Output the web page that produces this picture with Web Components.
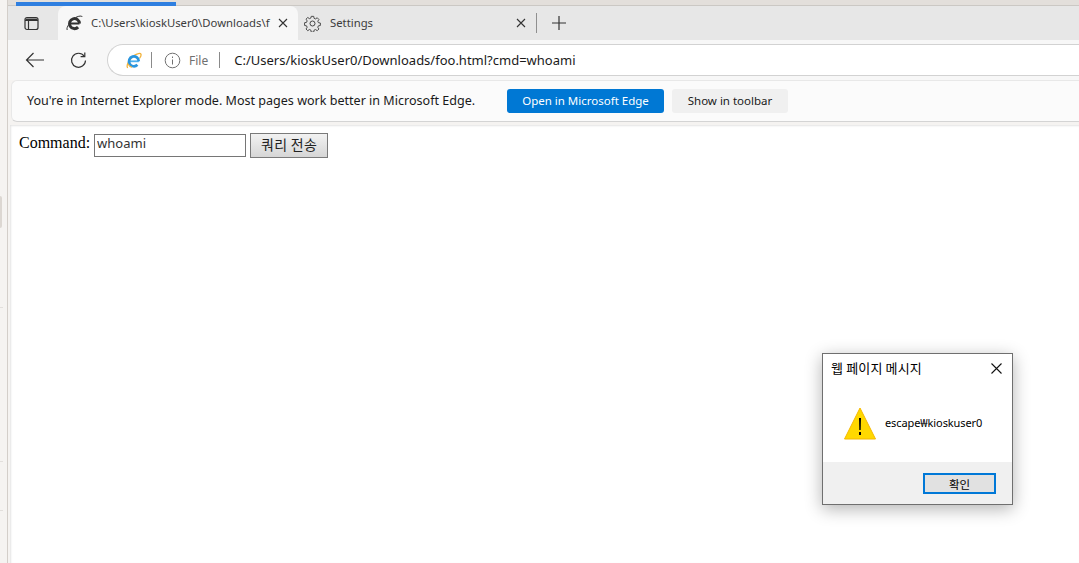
<!DOCTYPE html>
<html>
<head>
<meta charset="utf-8">
<title>foo.html</title>
<style>
  html, body { margin: 0; height: 563px; overflow: hidden; background: #fff; }
</style>
</head>
<body>
<edge-window>
  <tab-strip></tab-strip>
  <address-bar url="C:/Users/kioskUser0/Downloads/foo.html?cmd=whoami"></address-bar>
  <ie-infobar></ie-infobar>
  <command-page></command-page>
</edge-window>
<alert-dialog title="웹 페이지 메시지" message="escape₩kioskuser0" ok="확인"></alert-dialog>

<script>
'use strict';

const UI_FONT = '"Noto Sans", "Noto Sans CJK KR", sans-serif'
const KR_FONT = '"Noto Sans CJK KR", sans-serif'

// Blue/orange IE logo, used in the address bar
const IE_LOGO = `
  <svg width="16" height="17" viewBox="0 0 16 17" fill="none">
    <path d="M1.500 15.500C.5 14 1.800 9.500 5.500 6M8 3.500C11 1.500 14.500.8 15 2.200c.3 1-.3 2.500-1.200 3.800" stroke="#f2b33d" stroke-width="1.300" stroke-linecap="round"/>
    <path d="M3 9.300h9.800" stroke="#4cb0ee" stroke-width="1.800"/>
    <path d="M12.800 9.300a4.900 4.900 0 1 0-1.400 3.500" stroke="#2a95de" stroke-width="2.700"/>
    <path d="M2 12a6 6 0 0 0 4 3.300" stroke="#f2b33d" stroke-width="1.100"/>
  </svg>`

// Dark "e" used as the tab's favicon in IE mode
const IE_FAVICON = `
  <svg width="17" height="16" viewBox="0 0 17 16" fill="none" stroke="#333">
    <path d="M3.500 8.500h10" stroke-width="2"/>
    <path d="M13.500 8.500a5 5 0 1 0-1.400 3.600" stroke-width="3"/>
    <path d="M1.200 15c-.7-1.300.2-3.500 1.600-5.500M10 2.300C13 .8 16 .6 16.400 2" stroke-width="1"/>
  </svg>`

customElements.define('edge-window', class extends HTMLElement {
  constructor() {
    super()
    this.attachShadow({mode: 'open'}).innerHTML = `
      <style>
        :host { display: flex; height: 563px; background: #f5f3f1; }
        .rail { display: flex; flex-direction: column; flex: none; width: 7px; padding-top: 196px; box-sizing: border-box; }
        .grip { height: 32px; width: 2px; background: #dcd7d2; border-radius: 0 2px 2px 0; }
        .tick { height: 1px; width: 3px; background: #e2dfdc; }
        .main { flex: 1; min-width: 0; display: flex; flex-direction: column; border-left: 1px solid #d3cec9; }
        .top { height: 5px; background: #e3dfdb; flex: none; border-bottom: 1px solid #cbc8c4; }
        .progress { width: 160px; height: 4px; margin: 2px 0 0 8px; background: #2f7fe0; }
      </style>
      <div class="rail">
        <div class="grip"></div>
        <div class="tick" style="margin-top:79px"></div>
        <div class="tick" style="margin-top:153px"></div>
        <div class="tick" style="margin-top:48px"></div>
      </div>
      <div class="main">
        <div class="top"><div class="progress"></div></div>
        <slot></slot>
      </div>`
  }
})

customElements.define('tab-strip', class extends HTMLElement {
  constructor() {
    super()
    this.attachShadow({mode: 'open'}).innerHTML = `
      <style>
        :host { display: flex; align-items: stretch; height: 34px; flex: none; background: #e7e7e7; font: 11.300px ${UI_FONT}; color: #3c3c3c; }
        .side { width: 50px; flex: none; display: flex; align-items: center; padding-left: 16px; box-sizing: border-box; }
        .tab { display: flex; align-items: center; box-sizing: border-box; white-space: nowrap; }
        .active { width: 240px; background: #f7f7f7; border-radius: 8px 8px 0 0; padding: 0 10px 0 8px; }
        .other { width: 238px; padding: 0 0 0 6px; }
        .label { flex: 1; min-width: 0; padding-bottom: 1px; }
        .active .label { margin-left: 8px; }
        .close { flex: none; display: block; }
        .sep { width: 1px; height: 20px; margin: 7px 0 0 0; background: #8f8f8f; flex: none; }
        .plus { margin: 9px 0 0 14px; flex: none; width: 16px; height: 16px; }
      </style>
      <div class="side">
        <svg width="15" height="15" viewBox="0 0 15 15" fill="none" stroke="#333" stroke-width="1.200"><rect x="1" y="1.500" width="13" height="12" rx="2"/><path d="M1 4.500h13M4.500 4.500v9"/><path d="M1.500 2.500h12v2h-12z" fill="#333" stroke="none"/></svg>
      </div>
      <div class="tab active">
        ${IE_FAVICON}
        <span class="label">C:\\Users\\kioskUser0\\Downloads\\f</span>
        <svg class="close" width="10" height="10" viewBox="0 0 10 10" stroke="#333" stroke-width="1.100"><path d="M1 1l8 8M9 1l-8 8"/></svg>
      </div>
      <div class="tab other">
        <svg width="17" height="17" viewBox="0 0 17 17" fill="none" stroke="#444" stroke-width="1"><circle cx="8.500" cy="8.500" r="2.500"/><path d="M7.200 1h2.600l.4 2.100 1.500.6 1.800-1.200 1.800 1.800-1.200 1.800.6 1.500 2.100.4v2.600l-2.100.4-.6 1.500 1.200 1.800-1.800 1.800-1.800-1.200-1.500.6-.4 2.100H7.200l-.4-2.100-1.500-.6-1.800 1.200-1.800-1.800 1.200-1.800-.6-1.500-2.100-.4V7.700l2.100-.4.6-1.500-1.200-1.800 1.800-1.800 1.800 1.200 1.500-.6z" transform="translate(.4 .4) scale(.95)"/></svg>
        <span class="label" style="margin-left:9px">Settings</span>
        <svg class="close" width="10" height="10" viewBox="0 0 10 10" stroke="#333" stroke-width="1.100"><path d="M1 1l8 8M9 1l-8 8"/></svg>
        <span style="width:10px;flex:none"></span>
      </div>
      <div class="sep"></div>
      <svg class="plus" viewBox="0 0 16 16" stroke="#333" stroke-width="1.200"><path d="M8 1v14M1 8h14"/></svg>`
  }
})

customElements.define('address-bar', class extends HTMLElement {
  constructor() {
    super()
    let url = this.getAttribute('url')
    this.attachShadow({mode: 'open'}).innerHTML = `
      <style>
        :host { display: flex; align-items: flex-start; height: 40px; flex: none; background: #f7f7f7; box-sizing: border-box; padding-top: 4px; font: 12px ${UI_FONT}; }
        .nav { width: 99px; flex: none; display: flex; align-items: center; height: 32px; padding-left: 17px; box-sizing: border-box; gap: 25px; }
        .pill { flex: 1; height: 32px; box-sizing: border-box; background: #fff; border: 1px solid #d2d2d2; border-right: 0; border-radius: 16px 0 0 16px; display: flex; align-items: center; padding-left: 18px; white-space: nowrap; }
        .bar { width: 1px; height: 16px; background: #8a8a8a; flex: none; }
        .file { color: #707070; margin: 0 11px 0 8px; }
        .url { color: #1a1a1a; margin-left: 14px; font-size: 13px; }
      </style>
      <div class="nav">
        <svg width="20" height="16" viewBox="0 0 20 16" fill="none" stroke="#333" stroke-width="1.200"><path d="M19 8H1.500M8.500 1l-7 7 7 7"/></svg>
        <svg width="17" height="17" viewBox="0 0 17 17" fill="none" stroke="#333" stroke-width="1.200"><path d="M14.200 4.200A7 7 0 1 0 15.500 8.500"/><path d="M14.800 .5v4.200h-4.200"/></svg>
      </div>
      <div class="pill">
        ${IE_LOGO}
        <span class="bar" style="margin-left:9px"></span>
        <svg style="margin-left:12px" width="17" height="17" viewBox="0 0 17 17" fill="none" stroke="#707070"><circle cx="8.500" cy="8.500" r="7.300"/><path d="M8.500 7.500v5M8.500 4.500v1.500"/></svg>
        <span class="file">File</span>
        <span class="bar"></span>
        <span class="url">${url}</span>
      </div>`
  }
})

customElements.define('ie-infobar', class extends HTMLElement {
  constructor() {
    super()
    this.attachShadow({mode: 'open'}).innerHTML = `
      <style>
        :host { display: flex; align-items: center; height: 42px; flex: none; box-sizing: border-box; background: #fbfbfb; border: 1px solid #e8e8e8; border-bottom: 1px solid #d4d4d4; border-right: 0; border-radius: 6px 0 0 6px; margin-left: 3px; padding-left: 15px; font: 12.550px ${UI_FONT}; color: #1a1a1a; white-space: nowrap; }
        .msg { width: 480px; flex: none; padding-bottom: 1px; }
        .btn { height: 24px; display: flex; align-items: center; justify-content: center; border-radius: 3px; box-sizing: border-box; flex: none; font-size: 11.500px; padding-bottom: 1px; }
        .primary { width: 157px; background: #0078d4; color: #fff; }
        .plain { width: 116px; background: #f0f0f0; margin-left: 8px; }
      </style>
      <span class="msg">You're in Internet Explorer mode. Most pages work better in Microsoft Edge.</span>
      <span class="btn primary">Open in Microsoft Edge</span>
      <span class="btn plain">Show in toolbar</span>`
  }
})

customElements.define('command-page', class extends HTMLElement {
  constructor() {
    super()
    this.attachShadow({mode: 'open'}).innerHTML = `
      <style>
        :host { display: block; flex: 1; margin: 3px 0 0 2px; background: #fff; box-shadow: inset 1px 1px 2px #e4e4e4; padding: 8px 0 0 9px; font: 16px "Liberation Serif", serif; color: #000; }
        form { display: flex; align-items: center; }
        span { margin-bottom: 6px; }
        input { width: 152px; height: 23px; box-sizing: border-box; margin: 0 4px 0 4px; padding: 0 2px 5px; border: 1px solid #767676; font: 13px ${UI_FONT}; color: #333; background: #fff; outline: 0; }
        button { width: 78px; height: 25px; box-sizing: border-box; padding: 0 0 6px; border: 1px solid #7a7a7a; background: linear-gradient(#f2f2f2, #d6d6d6); font: 14px ${KR_FONT}; letter-spacing: .3px; color: #222; }
      </style>
      <form onsubmit="return false"><span>Command:</span><input value="whoami"><button type="button">쿼리 전송</button></form>`
  }
})

customElements.define('alert-dialog', class extends HTMLElement {
  constructor() {
    super()
    let title = this.getAttribute('title')
    let message = this.getAttribute('message')
    let ok = this.getAttribute('ok')
    this.attachShadow({mode: 'open'}).innerHTML = `
      <style>
        :host { position: absolute; left: 822px; top: 353px; width: 191px; height: 152px; box-sizing: border-box; display: flex; flex-direction: column; background: #fff; border: 1px solid #6f6f6f; box-shadow: 0 4px 16px rgba(0,0,0,.3); font: 13px ${KR_FONT}; color: #000; }
        .head { height: 28px; display: flex; align-items: center; justify-content: space-between; padding: 0 10px 0 8px; flex: none; }
        .head span { letter-spacing: .15px; padding-bottom: 2px; }
        .body { flex: 1; display: flex; align-items: flex-start; padding: 25px 0 0 21px; gap: 9px; }
        .body span { font: 11px "Noto Sans", ${KR_FONT}; letter-spacing: -0.1px; margin-top: 8px; }
        .foot { height: 42px; flex: none; background: #f0f0f0; display: flex; align-items: flex-start; justify-content: flex-end; padding: 11px 16px 0 0; box-sizing: border-box; }
        button { width: 73px; height: 21px; box-sizing: border-box; padding: 0; border: 2px solid #0078d7; background: #e1e1e1; font: 11.500px ${KR_FONT}; color: #000; }
      </style>
      <div class="head">
        <span>${title}</span>
        <svg width="11" height="11" viewBox="0 0 11 11" stroke="#111" stroke-width="1.100"><path d="M.5.500l10 10M10.500.500l-10 10"/></svg>
      </div>
      <div class="body">
        <svg width="32" height="33" viewBox="0 0 32 33"><path d="M16 1L31.500 32H.500z" fill="#ffd800" stroke="#f5b800" stroke-linejoin="round"/><path d="M15 11h2l-.3 12h-1.400z" fill="#000"/><rect x="15" y="25" width="2" height="3" fill="#000"/></svg>
        <span>${message}</span>
      </div>
      <div class="foot"><button type="button">${ok}</button></div>`
  }
})
</script>
</body>
</html>
